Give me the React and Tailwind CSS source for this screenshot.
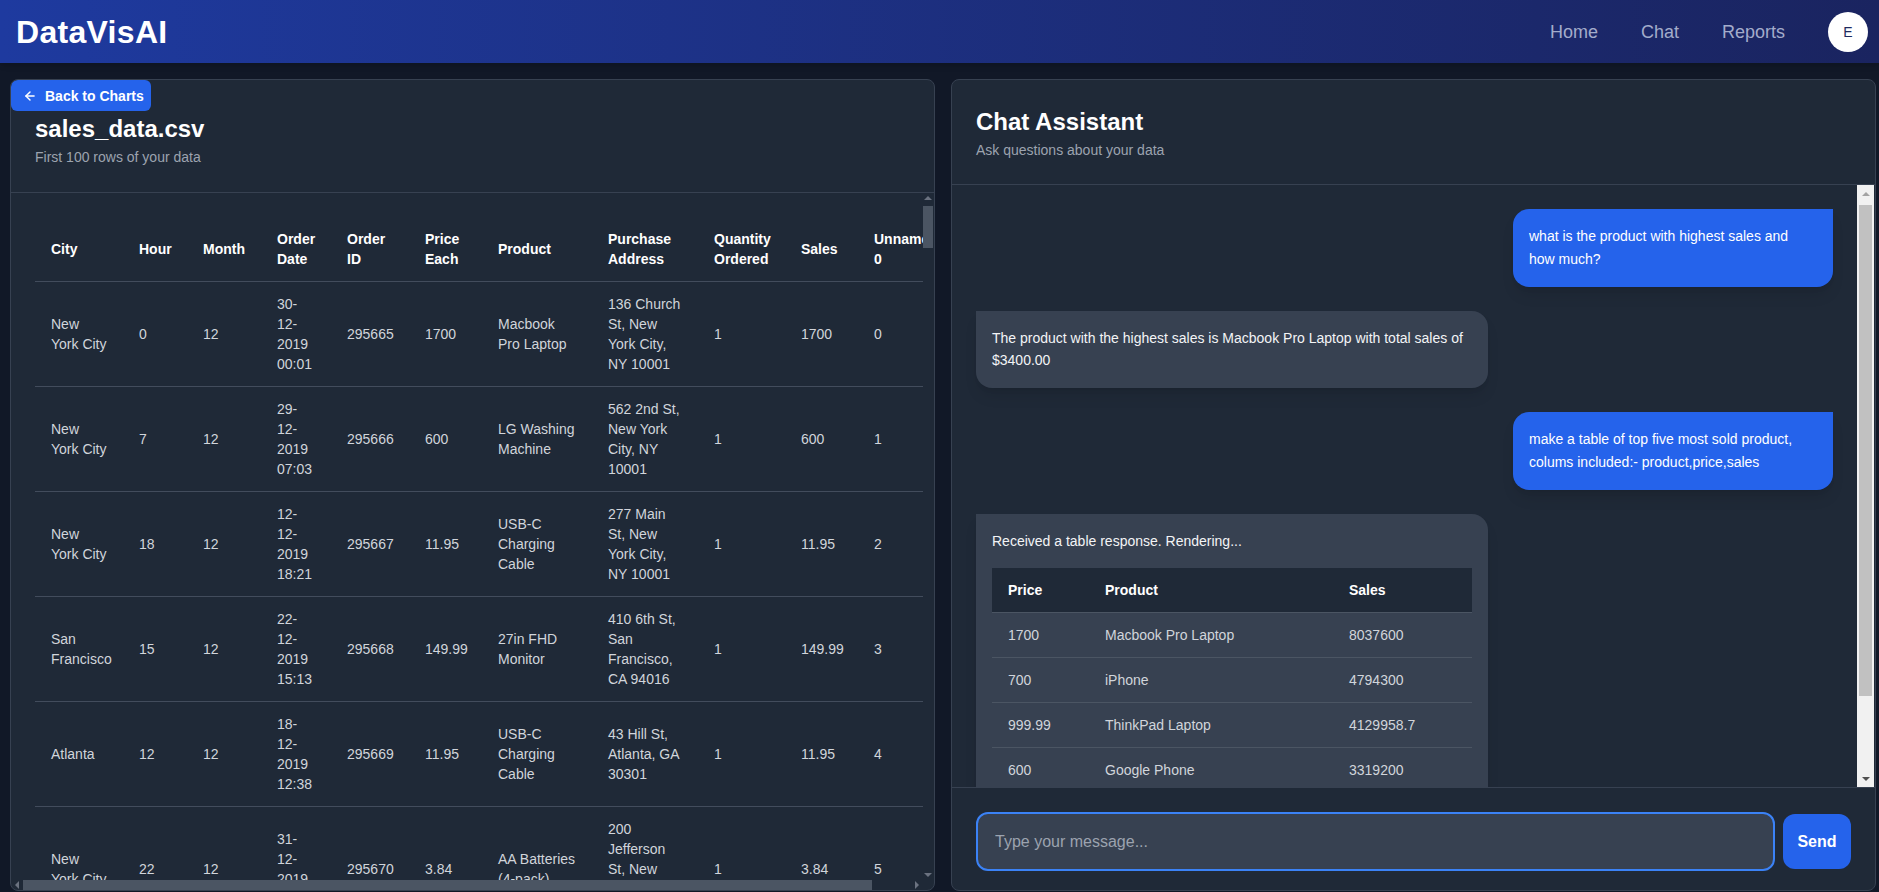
import React from "react";
import { ArrowLeft } from "lucide-react";

const columns = [
  { label: "City", w: "w-[88px]" },
  { label: "Hour", w: "w-[64px]" },
  { label: "Month", w: "w-[74px]" },
  { label: "Order Date", w: "w-[70px]" },
  { label: "Order ID", w: "w-[78px]" },
  { label: "Price Each", w: "w-[73px]" },
  { label: "Product", w: "w-[110px]" },
  { label: "Purchase Address", w: "w-[106px]" },
  { label: "Quantity Ordered", w: "w-[87px]" },
  { label: "Sales", w: "w-[73px]" },
  { label: "Unnamed: 0", w: "w-[94px]" },
];

const baseRows = [
  ["New York City", 0, "30-12-2019 00:01", 1700, "Macbook Pro Laptop", "136 Church St, New York City, NY 10001", 1],
  ["New York City", 7, "29-12-2019 07:03", 600, "LG Washing Machine", "562 2nd St, New York City, NY 10001", 1],
  ["New York City", 18, "12-12-2019 18:21", 11.95, "USB-C Charging Cable", "277 Main St, New York City, NY 10001", 1],
  ["San Francisco", 15, "22-12-2019 15:13", 149.99, "27in FHD Monitor", "410 6th St, San Francisco, CA 94016", 1],
  ["Atlanta", 12, "18-12-2019 12:38", 11.95, "USB-C Charging Cable", "43 Hill St, Atlanta, GA 30301", 1],
  ["New York City", 22, "31-12-2019 22:58", 3.84, "AA Batteries (4-pack)", "200 Jefferson St, New York City, NY 10001", 1],
  ["San Francisco", 23, "16-12-2019 23:32", 11.95, "USB-C Charging Cable", "928 12th St, San Francisco, CA 94016", 1],
  ["Los Angeles", 19, "28-12-2019 19:45", 11.95, "USB-C Charging Cable", "813 Hickory St, Los Angeles, CA 90001", 2],
  ["Seattle", 20, "13-12-2019 20:15", 99.99, "Bose SoundSport Headphones", "718 Wilson St, Seattle, WA 98101", 1],
  ["Dallas", 9, "05-12-2019 09:41", 2.99, "AAA Batteries (4-pack)", "77 7th St, Dallas, TX 75001", 2],
];

// first 100 rows, cycled from the sample above
const rows = Array.from({ length: 100 }, (_, i) => {
  const [city, hour, date, price, product, address, qty] = baseRows[i % baseRows.length];
  const sales = Math.round(price * qty * 100) / 100;
  return [city, hour, 12, date, 295665 + i, price, product, address, qty, sales, i];
});

const topProducts = [
  ["1700", "Macbook Pro Laptop", "8037600"],
  ["700", "iPhone", "4794300"],
  ["999.99", "ThinkPad Laptop", "4129958.7"],
  ["600", "Google Phone", "3319200"],
  ["150", "Apple Airpods Headphones", "2349150"],
];

const Up = ({ color }) => (
  <div className={`w-0 h-0 border-x-[4px] border-x-transparent border-b-[4px] ${color}`} />
);
const Down = ({ color }) => (
  <div className={`w-0 h-0 border-x-[4px] border-x-transparent border-t-[4px] ${color}`} />
);

function Header() {
  return (
    <header className="h-[63px] shrink-0 flex items-center justify-between pl-[16px] pr-[11px] bg-linear-to-r from-[#1e3a9f] to-[#1a2460] shadow-md">
      <h1 className="text-[32px] font-bold text-white tracking-[0.3px]">DataVisAI</h1>
      <nav className="flex items-center gap-[43px]">
        <a className="text-lg text-[#a3accb]">Home</a>
        <a className="text-lg text-[#a3accb]">Chat</a>
        <a className="text-lg text-[#a3accb]">Reports</a>
        <div className="w-10 h-10 rounded-full bg-white flex items-center justify-center text-sm font-medium text-[#1e2a5e]">
          E
        </div>
      </nav>
    </header>
  );
}

function DataPanel() {
  return (
    <section className="relative flex flex-col min-h-0 rounded-lg border border-[#374151] bg-[#1f2937] overflow-hidden">
      <button className="absolute top-0 left-0 z-10 flex items-center gap-2 h-[31px] pl-3 pr-[7px] rounded-md bg-[#2563eb] text-sm font-semibold text-white">
        <ArrowLeft size={14} strokeWidth={2.5} />
        Back to Charts
      </button>
      <div className="px-6 pt-[33px] pb-[25px] border-b border-[#374151]">
        <h2 className="text-2xl leading-8 font-bold text-white">sales_data.csv</h2>
        <p className="mt-[2px] text-sm text-[#9ca3af]">First 100 rows of your data</p>
      </div>
      <div className="flex-1 min-h-0 flex flex-col">
        <div className="flex-1 min-h-0 flex">
          <div className="flex-1 min-w-0 overflow-hidden p-6">
            <table className="table-fixed w-[917px] text-sm text-left">
              <thead>
                <tr className="border-b border-[#424c5c]">
                  {columns.map(c => (
                    <th key={c.label} className={`${c.w} px-4 py-3 font-semibold leading-5 text-white align-middle`}>
                      {c.label}
                    </th>
                  ))}
                </tr>
              </thead>
              <tbody>
                {rows.map((r, i) => (
                  <tr key={i} className="border-b border-[#424c5c]">
                    {r.map((v, j) => (
                      <td key={j} className="px-4 py-3 leading-5 text-[#d1d5db] align-middle">
                        {v}
                      </td>
                    ))}
                  </tr>
                ))}
              </tbody>
            </table>
          </div>
          <div className="w-[10px] mr-px flex flex-col items-center">
            <div className="h-[10px] flex items-center justify-center"><Up color="border-b-[#6b7280]" /></div>
            <div className="mt-[3px] w-[10px] h-[42px] bg-[#4b5563]" />
            <div className="flex-1" />
            <div className="h-[10px] flex items-center justify-center"><Down color="border-t-[#6b7280]" /></div>
          </div>
        </div>
        <div className="h-[10px] shrink-0 flex items-center pr-[11px]">
          <div className="w-[12px] flex justify-center"><div className="w-0 h-0 border-y-[4px] border-y-transparent border-r-[4px] border-r-[#6b7280]" /></div>
          <div className="w-[849px] h-[10px] bg-[#4b5563]" />
          <div className="flex-1" />
          <div className="w-[12px] flex justify-center"><div className="w-0 h-0 border-y-[4px] border-y-transparent border-l-[4px] border-l-[#6b7280]" /></div>
        </div>
      </div>
    </section>
  );
}

function UserBubble({ children }) {
  return (
    <div className="flex justify-end">
      <div className="max-w-xs p-4 rounded-2xl rounded-tr-none bg-[#2563eb] text-sm leading-relaxed text-white shadow-lg">
        {children}
      </div>
    </div>
  );
}

function BotBubble({ full, children }) {
  return (
    <div className="flex justify-start">
      <div className={`${full ? "w-full" : ""} max-w-lg p-4 rounded-2xl rounded-tl-none bg-[#374151] text-sm leading-relaxed text-[#f3f4f6] shadow-lg`}>
        {children}
      </div>
    </div>
  );
}

function ChatPanel() {
  return (
    <section className="flex flex-col min-h-0 rounded-lg border border-[#374151] bg-[#1f2937] overflow-hidden">
      <div className="px-6 pt-[26px] pb-6 border-b border-[#374151]">
        <h2 className="text-2xl leading-8 font-bold text-white">Chat Assistant</h2>
        <p className="mt-[2px] text-sm text-[#9ca3af]">Ask questions about your data</p>
      </div>
      <div className="flex-1 min-h-0 flex">
        <div className="flex-1 min-w-0 overflow-hidden p-6 space-y-6">
          <UserBubble>what is the product with highest sales and how much?</UserBubble>
          <BotBubble>
            The product with the highest sales is Macbook Pro Laptop with total sales of $3400.00
          </BotBubble>
          <UserBubble>make a table of top five most sold product, colums included:- product,price,sales</UserBubble>
          <BotBubble full>
            <p className="mb-4">Received a table response. Rendering...</p>
            <table className="w-full table-fixed text-sm text-left">
              <thead className="bg-[#1f2937]">
                <tr>
                  <th className="w-[97px] px-4 py-3 leading-5 font-semibold text-white">Price</th>
                  <th className="w-[244px] px-4 py-3 leading-5 font-semibold text-white">Product</th>
                  <th className="px-4 py-3 leading-5 font-semibold text-white">Sales</th>
                </tr>
              </thead>
              <tbody>
                {topProducts.map((r, i) => (
                  <tr key={i} className="border-t border-[#4b5563]">
                    {r.map((v, j) => (
                      <td key={j} className="px-4 py-3 leading-5 text-[#d1d5db]">{v}</td>
                    ))}
                  </tr>
                ))}
              </tbody>
            </table>
          </BotBubble>
        </div>
        <div className="w-[17px] mr-px shrink-0 bg-[#f1f1f1] flex flex-col">
          <div className="h-[17px] flex items-center justify-center"><Up color="border-b-[#a3a3a3]" /></div>
          <div className="mx-[2px] mt-[3px] h-[491px] bg-[#c1c1c1]" />
          <div className="flex-1" />
          <div className="h-[17px] flex items-center justify-center"><Down color="border-t-[#505050]" /></div>
        </div>
      </div>
      <div className="border-t border-[#374151] px-6 pt-6 pb-[19px] flex items-center gap-2">
        <input
          autoFocus
          placeholder="Type your message..."
          className="flex-1 h-[59px] px-[17px] rounded-xl border-2 border-[#3b82f6] bg-[#374151] text-base text-white placeholder:text-[#9ca3af] outline-none"
        />
        <button className="w-[68px] h-[55px] rounded-xl bg-[#2563eb] text-base font-semibold text-white">
          Send
        </button>
      </div>
    </section>
  );
}

export default function App() {
  return (
    <div className="h-screen flex flex-col bg-[#111827] font-['Liberation_Sans',Arial,sans-serif] overflow-hidden">
      <Header />
      <main className="flex-1 min-h-0 grid grid-cols-2 gap-4 pl-[10px] pr-[3px] pt-4 pb-px">
        <DataPanel />
        <ChatPanel />
      </main>
    </div>
  );
}
